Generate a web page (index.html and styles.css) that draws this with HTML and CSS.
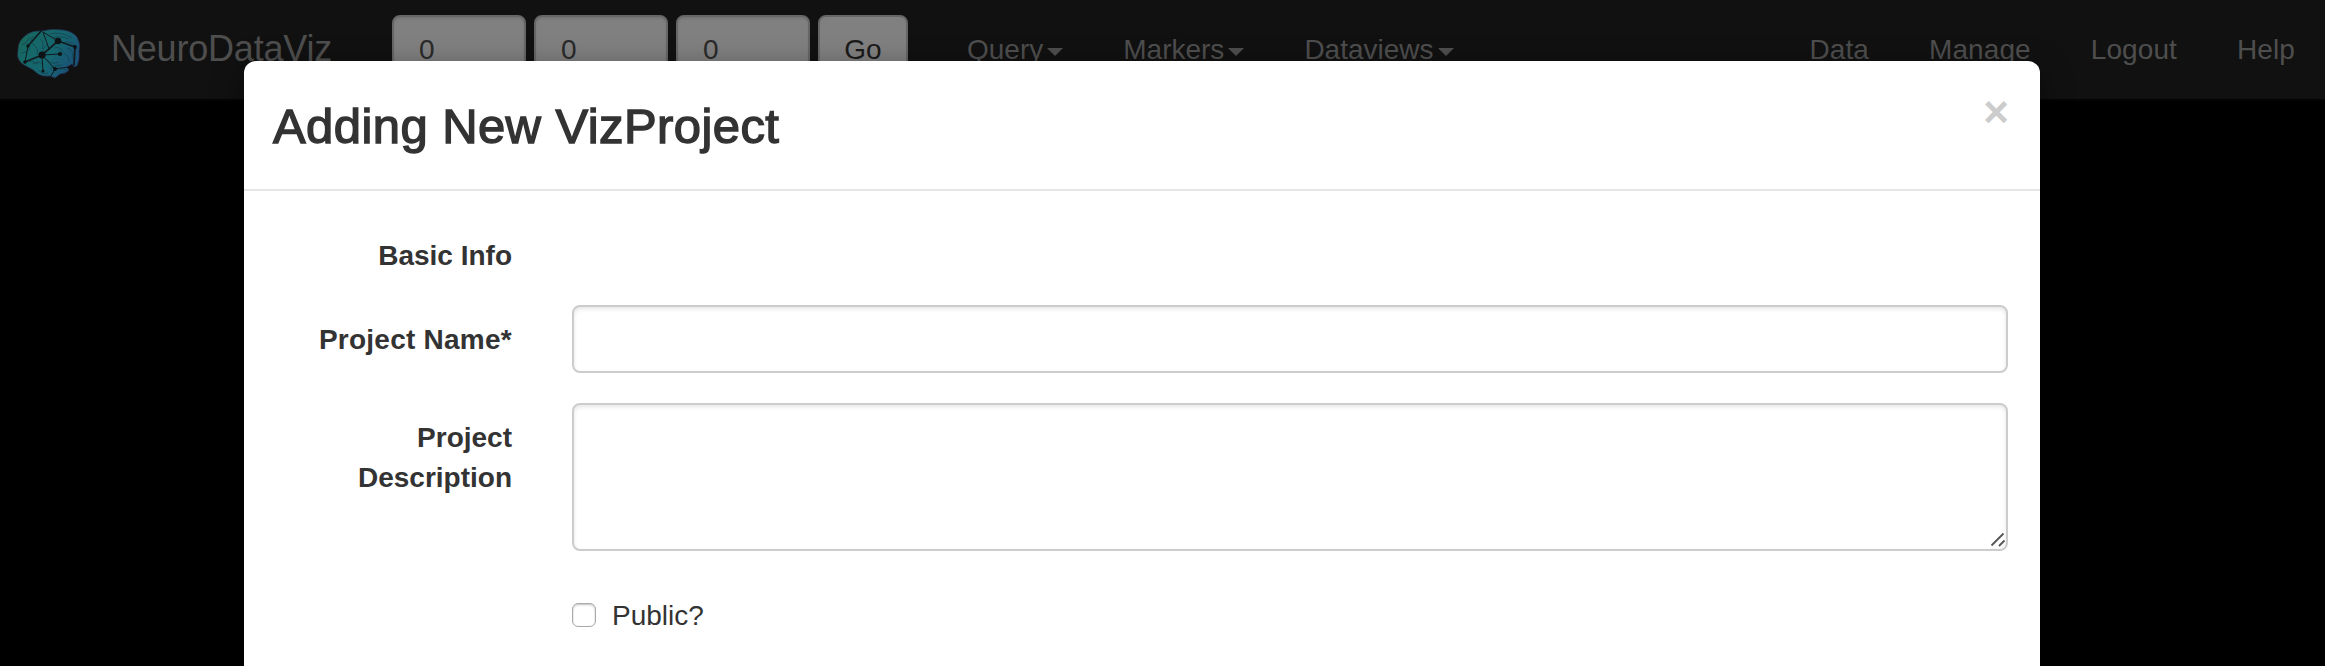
FILE: index.html
```html
<!DOCTYPE html>
<html lang="en">
<head>
<meta charset="utf-8">
<title>NeuroDataViz</title>
<link rel="stylesheet" href="styles.css">
</head>
<body>
<nav class="navbar">
  <svg class="logo" viewBox="0 0 64 51" width="64" height="51">
    <defs>
      <linearGradient id="brain" x1="0" y1="0" x2="1" y2="0.5">
        <stop offset="0" stop-color="#1b6750"/>
        <stop offset="0.3" stop-color="#166867"/>
        <stop offset="0.65" stop-color="#15666f"/>
        <stop offset="1" stop-color="#1b5278"/>
      </linearGradient>
    </defs>
    <path fill="url(#brain)" stroke="#222a4c" stroke-width="0.7" d="M1 20Q1 12 9 6Q16 1 25 2Q35-1 46 1Q55 2 60 8Q64 14 62 22Q63 31 60 37L57 38L55 35L50 38L52 41Q49 45 43 45L38 49L33 47Q26 48 21 45Q16 40 9 37Q2 34 0.5 27Z"/>
    <g fill="none" stroke="#154652" stroke-width="0.9">
      <path d="M5 16q5-1 8-8M4 24q6 0 9-5M16 7q-4 6 1 9q5 3 3 9M23 10q5 3 2 10M33 5q10-3 22 4M35 9q7-3 17 1M48 13q9-1 11 7M50 19q7 2 6 11M46 24q7 3 6 9M30 31q5 5 12 2M33 40q5-5 12-4M8 32q7-1 13 3M16 35q6-4 9 0M37 19q6-2 9 4M31 15q-6 4-5 9M22 41q3 5 9 3M40 40q7-1 10 1"/>
    </g>
    <g fill="none" stroke="#101c20" stroke-linecap="round">
      <path stroke-width="1.8" d="M25 1L11 17M8 33L25 26L41 12L58 18L57 36"/>
      <path stroke-width="1" d="M11 17L8 33M41 12L26 3L32 20M25 26L26 43M25 26L43 25M38 40L51 38M25 26L38 40M33 49L38 40"/>
    </g>
    <g fill="#0d1215">
      <circle cx="41" cy="12" r="3.3"/><circle cx="25" cy="26" r="3.6"/><circle cx="43" cy="25" r="2.1"/><circle cx="58" cy="18" r="1.9"/><circle cx="11" cy="17" r="1.7"/><circle cx="8" cy="33" r="1.8"/><circle cx="38" cy="40" r="2"/><circle cx="26" cy="42" r="1.5"/>
    </g>
  </svg>
  <span class="brand">NeuroDataViz</span>
  <form class="coords">
    <span class="coord">0</span>
    <span class="coord">0</span>
    <span class="coord">0</span>
    <span class="go">Go</span>
  </form>
  <div class="links">
    <a class="link">Query<i class="caret"></i></a>
    <a class="link">Markers<i class="caret"></i></a>
    <a class="link">Dataviews<i class="caret"></i></a>
  </div>
  <div class="links links-right">
    <a class="link">Data</a>
    <a class="link">Manage</a>
    <a class="link">Logout</a>
    <a class="link">Help</a>
  </div>
</nav>
<main class="modal">
  <header class="modal-header">
    <h3 class="title">Adding New VizProject</h3>
    <span class="close">×</span>
  </header>
  <div class="modal-body">
    <div class="row row-heading"><span class="label">Basic Info</span></div>
    <div class="row row-name"><label class="label label-name" for="name">Project Name*</label><input class="control" id="name" type="text"></div>
    <div class="row row-desc"><label class="label" for="desc">Project Description</label>
      <div class="area"><textarea class="control control-area" id="desc"></textarea>
        <svg class="grip" width="16" height="16" viewBox="0 0 16 16"><path d="M1.5 13.5L13.5 1.5M9 14L14.5 8.5" stroke="#555" stroke-width="1.8" fill="none"/></svg>
      </div>
    </div>
    <div class="row"><span class="label"></span><label class="check"><input class="box" type="checkbox">Public?</label></div>
  </div>
</main>
</body>
</html>
```
FILE: styles.css
```css
* { box-sizing: border-box; }
body {
  margin: 0;
  height: 666px;
  overflow: hidden;
  background: #000;
  color: #333;
  font: 28px/40px "Liberation Sans", Arial, sans-serif;
}
.navbar {
  display: flex;
  height: 101px;
  background: #111;
  border-bottom: 2px solid #040404;
}
.logo { margin: 29px 0 0 17px; flex: none; }
.brand {
  width: 281px;
  margin: 29px 0 0 30px;
  color: #4e4e4e;
  font-size: 36px;
  letter-spacing: -0.2px;
}
.coords { display: flex; gap: 8px; margin-top: 15px; }
.coord, .go {
  height: 68px;
  padding: 13px 25px;
  border: 2px solid #666;
  border-radius: 8px;
  background: #808080;
}
.coord {
  width: 134px;
  color: #2a2a2a;
  box-shadow: inset 0 2px 2px rgba(0, 0, 0, 0.075);
}
.go { width: 90px; padding: 13px 0; text-align: center; color: #1a1a1a; }
.links { display: flex; margin: 30px 0 0 29px; color: #4e4e4e; }
.links-right { margin-left: auto; letter-spacing: 0.1px; }
.link { padding: 0 30px; white-space: nowrap; }
.caret {
  display: inline-block;
  margin-left: 4px;
  vertical-align: middle;
  border: 8px solid transparent;
  border-top-color: #4e4e4e;
  border-bottom: 0;
}
.modal {
  position: absolute;
  left: 244px;
  top: 61px;
  width: 1796px;
  height: 605px;
  background: #fff;
  border-radius: 12px 12px 0 0;
  box-shadow: 0 10px 30px rgba(0, 0, 0, 0.5);
}
.modal-header {
  display: flex;
  justify-content: space-between;
  height: 130px;
  padding: 38px 31px 0 29px;
  border-bottom: 2px solid #e5e5e5;
}
.title {
  margin: 0;
  font-size: 49px;
  font-weight: 400;
  line-height: 54px;
  letter-spacing: 0.42px;
  -webkit-text-stroke: 1.4px #333;
}
.close { color: #ccc; font-size: 44px; font-weight: 700; line-height: 26px; }
.modal-body { padding: 44px 32px 0 0; }
.row { display: flex; column-gap: 60px; }
.label { width: 268px; padding-left: 40px; flex: none; text-align: right; font-weight: 700; }
.label-name { letter-spacing: 0.25px; }
.row-heading { height: 70px; padding-top: 1px; }
.row-name { height: 98px; }
.row-name .label, .row-desc .label { padding-top: 15px; }
.row-desc { height: 192px; }
.control {
  display: block;
  width: 100%;
  height: 68px;
  border: 2px solid #ccc;
  border-radius: 8px;
  background: #fff;
  box-shadow: inset 0 2px 4px rgba(0, 0, 0, 0.1);
}
.area { position: relative; flex: 1; height: 148px; }
.control-area { height: 148px; resize: none; }
.grip { position: absolute; right: 2px; bottom: 3px; }
.check { display: flex; gap: 16px; padding-top: 1px; }
.box {
  appearance: none;
  width: 24px;
  height: 24px;
  margin: 7px 0 0;
  border: 1.5px solid #aaa;
  border-radius: 6px;
  background: #fff;
  box-shadow: inset 0 1px 2px rgba(0, 0, 0, 0.25);
}
```
